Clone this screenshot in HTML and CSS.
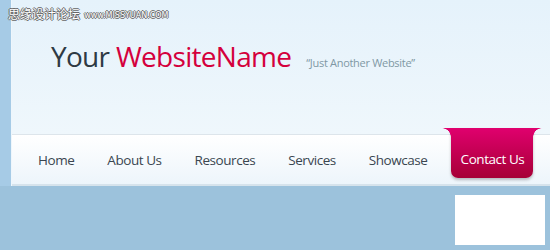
FILE: index.html
```html
<!DOCTYPE html>
<html lang="en">

<head>
    <meta name="viewport" content="width=device-width, initial-scale=1.0" />
    <title>Your WebsiteName</title>
    <link rel="stylesheet" href="styles.css">
</head>

<body>
    <div class="watermark">思缘设计论坛 <span>www.MISSYUAN.COM</span></div>
    <div class="top">
        <div class="strip"></div>
        <div class="main">
            <div class="header">
                <h1><span class="your">Your</span> <span class="name">WebsiteName</span></h1>
                <p class="tagline">“Just Another Website”</p>
            </div>
            <ul class="nav">
                <li><a href="#">Home</a></li>
                <li><a href="#">About Us</a></li>
                <li><a href="#">Resources</a></li>
                <li><a href="#">Services</a></li>
                <li><a href="#">Showcase</a></li>
                <li class="contact"><a href="#">Contact Us</a></li>
            </ul>
        </div>
    </div>
    <div class="below">
        <div class="box"></div>
    </div>
</body>

</html>
```

FILE: styles.css
```css
* {
    padding: 0;
    margin: 0;
    box-sizing: border-box;
    font-family: "Open Sans", "Noto Sans CJK SC", sans-serif;
}

body {
    background-color: #9cc2dc;
    width: 550px;
    height: 250px;
    overflow: hidden;
}

.watermark {
    position: absolute;
    left: 8px;
    top: 7px;
    font-size: 12px;
    line-height: 16px;
    color: #ffffff;
    text-shadow: 1px 0 #666, -1px 0 #666, 0 1px #666, 0 -1px #666;
}

.watermark span {
    font-family: "DejaVu Sans", sans-serif;
    font-size: 8px;
    margin-left: 1px;
    vertical-align: 1px;
}

.top {
    display: flex;
    height: 186px;
}

.strip {
    width: 12px;
    background-color: #a6cbe6;
    border-right: 1px solid #eef6fc;
}

.main {
    flex: 1;
    display: flex;
    flex-direction: column;
}

.header {
    height: 134px;
    background: linear-gradient(to bottom, #e5f2fb, #eff7fc);
    display: flex;
    align-items: baseline;
    padding: 36px 0 0 39px;
}

.header h1 {
    font-weight: normal;
    font-size: 28px;
    letter-spacing: -0.7px;
    line-height: 40px;
}

.your {
    color: #2e3a44;
}

.name {
    color: #d4003c;
}

.tagline {
    font-size: 11px;
    color: #7f98a4;
    margin-left: 15px;
    letter-spacing: -0.3px;
}

.nav {
    list-style: none;
    display: flex;
    align-items: center;
    height: 52px;
    padding-left: 26px;
    background: linear-gradient(to bottom, #ffffff, #edf5fb);
    border-top: 1px solid #dde5eb;
    border-bottom: 2px solid #d6e3ec;
}

.nav li {
    margin-right: 33px;
}

.nav a {
    display: block;
    color: #3a4650;
    text-decoration: none;
    font-size: 13.5px;
    letter-spacing: -0.45px;
}

.nav .contact {
    position: relative;
    margin: -13px 0 0 -9px;
}

.nav .contact a {
    width: 82px;
    height: 50px;
    padding-top: 22px;
    text-align: center;
    color: #ffffff;
    background: linear-gradient(to bottom, #e0006e, #a60036);
    border-radius: 0 0 7px 7px;
    box-shadow: 0 2px 3px rgba(0, 0, 0, 0.25);
}

.nav .contact:before,
.nav .contact:after {
    content: "";
    position: absolute;
    top: 0;
    width: 9px;
    height: 9px;
}

.nav .contact:before {
    left: -9px;
    background: radial-gradient(circle at 0 100%, transparent 8.5px, #e0006e 9px);
}

.nav .contact:after {
    right: -9px;
    background: radial-gradient(circle at 100% 100%, transparent 8.5px, #e0006e 9px);
}

.below {
    display: flex;
    justify-content: flex-end;
    padding: 9px 5px 0 0;
}

.box {
    width: 90px;
    height: 50px;
    background-color: #ffffff;
}
```
